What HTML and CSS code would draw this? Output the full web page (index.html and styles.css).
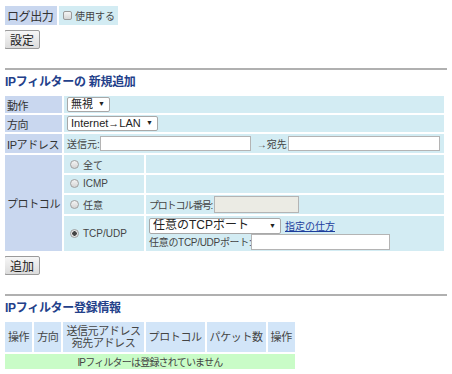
FILE: index.html
```html
<!DOCTYPE html>
<html lang="ja">
<head>
    <meta charset="UTF-8">
    <title>IPフィルター</title>
    <link rel="stylesheet" href="styles.css">
</head>
<body>

    <!-- Log output -->
    <table class="form log">
        <tr>
            <th>ログ出力</th>
            <td><label class="check"><input type="checkbox"> 使用する</label></td>
        </tr>
    </table>
    <button class="btn">設定</button>

    <hr>

    <h2>IPフィルターの 新規追加</h2>
    <table class="form add">
        <colgroup>
            <col class="c-label">
            <col class="c-radio">
            <col>
        </colgroup>
        <tr class="r-action">
            <th>動作</th>
            <td colspan="2">
                <span class="sel"><select><option>無視</option></select></span>
            </td>
        </tr>
        <tr class="r-dir">
            <th>方向</th>
            <td colspan="2">
                <span class="sel"><select><option>Internet→LAN</option></select></span>
            </td>
        </tr>
        <tr class="r-ip">
            <th>IPアドレス</th>
            <td colspan="2" class="small">
                <div class="line">
                    送信元:<input type="text" class="txt w-src"><span class="arrow">→宛先</span><input type="text" class="txt w-dst">
                </div>
            </td>
        </tr>
        <tr class="r-proto">
            <th rowspan="4">プロトコル</th>
            <td class="radio-cell"><label><input type="radio" name="p"> 全て</label></td>
            <td></td>
        </tr>
        <tr class="r-proto">
            <td class="radio-cell"><label><input type="radio" name="p"> ICMP</label></td>
            <td></td>
        </tr>
        <tr class="r-proto tall">
            <td class="radio-cell"><label><input type="radio" name="p"> 任意</label></td>
            <td class="small">
                <div class="line"><span class="tight">プロトコル番号:</span><input type="text" class="txt w-num" disabled></div>
            </td>
        </tr>
        <tr class="r-tcp">
            <td class="radio-cell"><label><input type="radio" name="p" checked> TCP/UDP</label></td>
            <td class="small">
                <div class="line">
                    <span class="sel wide"><select><option>任意のTCPポート</option></select></span>
                    <a href="#">指定の仕方</a>
                </div>
                <div class="line"><span class="semi">任意のTCP/UDPポート:</span><input type="text" class="txt w-port"></div>
            </td>
        </tr>
    </table>
    <button class="btn">追加</button>

    <hr>

    <h2>IPフィルター登録情報</h2>
    <table class="list">
        <tr>
            <th>操作</th>
            <th>方向</th>
            <th>送信元アドレス<br>宛先アドレス</th>
            <th>プロトコル</th>
            <th>パケット数</th>
            <th>操作</th>
        </tr>
        <tr>
            <td colspan="6" class="empty">IPフィルターは登録されていません</td>
        </tr>
    </table>

</body>
</html>
```

FILE: styles.css
```css
body {
    margin: 4px 5px;
    font-family: "Liberation Sans", "Noto Sans CJK JP", sans-serif;
    font-size: 11px;
    color: #333;
}

table {
    border-collapse: separate;
    border-spacing: 2px;
    margin-left: -2px;
}

.form th {
    background-color: #c9d7ef;
    font-weight: normal;
    text-align: left;
    font-size: 11px;
    letter-spacing: -0.4px;
    padding: 0 2px;
    white-space: nowrap;
    color: #333;
}

.form td {
    background-color: #d3ecf3;
    padding: 0 3px;
    vertical-align: middle;
    white-space: nowrap;
}

.log th {
    height: 19px;
    font-size: 12px;
    width: 48px;
}

.check {
    font-size: 10px;
    display: inline-flex;
    align-items: center;
    color: #444;
}

input[type="checkbox"] {
    appearance: none;
    width: 9px;
    height: 9px;
    margin: 0 3px 0 1px;
    border: 1px solid #9a9a9a;
    border-radius: 2px;
    background: linear-gradient(#f4f4f4, #d6d6d6);
}

.btn {
    font-family: inherit;
    font-size: 12px;
    padding: 0 5px;
    height: 19px;
    margin: 3px 0 0 -1px;
    border: 1px solid #9a9a9a;
    border-radius: 2px;
    background: linear-gradient(#f6f6f6, #dcdcdc);
    color: #222;
}

hr {
    border: none;
    border-top: 2px solid #b0b0b0;
    margin: 19px -5px 2px 0;
}

h2 {
    font-size: 12px;
    letter-spacing: -0.3px;
    color: #23408a;
    margin: 0 0 5px;
}

.add {
    width: 443px;
    table-layout: fixed;
}

.c-label {
    width: 57px;
}

.c-radio {
    width: 80px;
}

.r-action td, .r-dir td {
    height: 17px;
}

.r-ip td {
    height: 19px;
}

.r-proto td {
    height: 18px;
}

.r-proto.tall td {
    height: 19px;
}

.r-tcp td {
    height: 35px;
}

.radio-cell label {
    display: inline-flex;
    align-items: center;
    font-size: 10px;
    color: #444;
}

input[type="radio"] {
    appearance: none;
    width: 9px;
    height: 9px;
    margin: 0 4px 0 3px;
    border: 1px solid #a0a0a0;
    border-radius: 50%;
    background: linear-gradient(#f4f4f4, #d4d4d4);
}

input[type="radio"]:checked {
    background: radial-gradient(circle, #444 0 2px, #e6e6e6 2.5px);
}

.small {
    font-size: 10px;
    color: #444;
}

.tight {
    letter-spacing: -1.2px;
    margin-right: 2px;
}

.semi {
    letter-spacing: -0.3px;
}

.sel {
    position: relative;
    display: inline-block;
    vertical-align: middle;
}

.sel select {
    appearance: none;
    font-family: inherit;
    font-size: 11px;
    color: #222;
    background: #fff;
    border: 1px solid #a8a8a8;
    border-radius: 2px;
    height: 15px;
    padding: 0 16px 0 3px;
    line-height: 13px;
    display: block;
}

.sel::after {
    content: "▼";
    position: absolute;
    right: 5px;
    top: 3px;
    font-size: 7px;
    color: #222;
    pointer-events: none;
}

.sel.wide select {
    width: 132px;
    height: 16px;
    font-size: 12px;
}

.sel.wide::after {
    top: 4px;
}

.txt {
    height: 15px;
    border: 1px solid #b4b4b4;
    background: #fff;
    padding: 0 2px;
    margin: 0;
    box-sizing: border-box;
}

.txt:disabled {
    background: #ebebe4;
}

.w-src {
    width: 151px;
}

.arrow {
    margin: 0 1px 0 6px;
}

.w-dst {
    width: 152px;
}

.w-num {
    width: 85px;
    height: 17px;
}

.w-port {
    width: 139px;
    height: 16px;
}

.line {
    display: flex;
    align-items: center;
}

.line a {
    color: #1c3d9c;
    font-size: 10px;
    margin-left: 4px;
}

.list {
    margin-top: 2px;
}

.list th {
    background-color: #d2e5f8;
    font-weight: normal;
    font-size: 11px;
    letter-spacing: -0.4px;
    color: #444;
    height: 30px;
    line-height: 12px;
    padding: 0 3px;
    white-space: nowrap;
}

.empty {
    background-color: #c9fcc7;
    text-align: center;
    font-size: 10px;
    letter-spacing: -0.8px;
    color: #444;
    height: 13px;
    padding: 0;
}
```
